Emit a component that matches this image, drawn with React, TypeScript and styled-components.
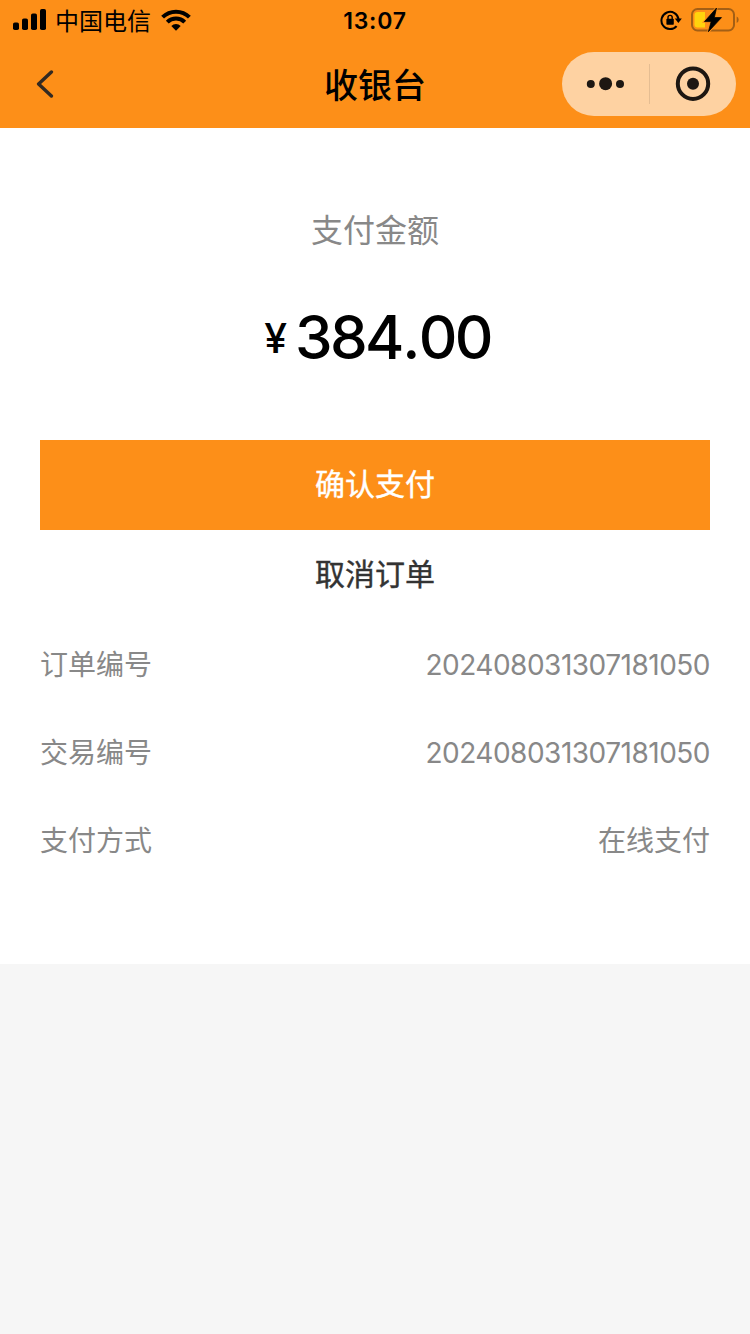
import React from 'react';
import styled, { createGlobalStyle } from 'styled-components';

const GlobalStyle = createGlobalStyle`
  * { box-sizing: border-box; }
  body {
    margin: 0;
    background: #f6f6f6;
    font-family: Inter, "Noto Sans CJK SC", sans-serif;
    color: #000;
  }
  svg { display: block; }
`;

const Page = styled.div`
  width: 750px;
  min-height: 1334px;
  background: #f6f6f6;
`;

const Header = styled.header`
  height: 128px;
  background: #fd8f18;
`;

const StatusBar = styled.div`
  height: 40px;
  padding: 0 11px 0 13px;
  display: grid;
  grid-template-columns: 1fr auto 1fr;
  align-items: center;
`;

const StatusGroup = styled.div<{ $end?: boolean }>`
  display: flex;
  align-items: center;
  justify-content: ${(p) => (p.$end ? 'flex-end' : 'flex-start')};
  gap: 9px;
`;

const Carrier = styled.span`
  font-size: 24px;
  line-height: 36px;
  padding-top: 3px;
  margin-right: 1px;
`;

const Clock = styled.span`
  font-size: 23px;
  font-weight: 600;
  line-height: 38px;
  padding-top: 2px;
  letter-spacing: 0.8px;
  margin-right: 2px;
`;

const NavBar = styled.nav`
  height: 88px;
  padding: 0 14px 0 36px;
  display: grid;
  grid-template-columns: 1fr auto 1fr;
  align-items: center;
`;

const BackButton = styled.button`
  border: 0;
  padding: 0;
  background: none;
  justify-self: start;
`;

const Title = styled.h1`
  margin: 0;
  padding: 3px 22px 0 0;
  font-size: 34px;
  font-weight: 500;
  line-height: 48px;
`;

const Capsule = styled.div`
  justify-self: end;
  width: 174px;
  height: 64px;
  border-radius: 32px;
  background: #fed2a2;
  display: flex;
  align-items: center;
`;

const CapsuleItem = styled.div`
  flex: 1;
  display: flex;
  justify-content: center;
`;

const CapsuleDivider = styled.div`
  width: 1px;
  height: 40px;
  background: #e5bd92;
`;

const Checkout = styled.main`
  height: 836px;
  padding: 80px 40px 0;
  background: #fff;
`;

const AmountLabel = styled.div`
  font-size: 32px;
  line-height: 46px;
  text-align: center;
  color: #888;
`;

const Amount = styled.div`
  height: 90px;
  margin-top: 38px;
  padding-left: 5px;
  display: flex;
  justify-content: center;
  align-items: center;
  line-height: 90px;
  font-weight: 500;
`;

const Currency = styled.span`
  font-size: 41px;
  font-weight: 450;
  padding-top: 2px;
  margin-right: 8px;
`;

const Value = styled.span`
  font-size: 60px;
  letter-spacing: -2.7px;
`;

const DecimalPoint = styled.span`
  margin: 0 1px 0 0.5px;
`;

const Action = styled.button<{ $primary?: boolean }>`
  display: block;
  width: 100%;
  height: 90px;
  padding: 0 0 7px;
  border: 0;
  font-family: inherit;
  font-size: 30px;
  font-weight: 400;
  -webkit-text-stroke: 0.4px currentColor;
  color: ${(p) => (p.$primary ? '#fff' : '#333')};
  background: ${(p) => (p.$primary ? '#fd8f18' : 'transparent')};
`;

const Actions = styled.div`
  margin-top: 58px;
`;

const Details = styled.dl`
  margin: 0;
`;

const DetailRow = styled.div`
  height: 88px;
  padding-top: 2px;
  display: flex;
  justify-content: space-between;
  align-items: center;
  font-size: 28px;
  line-height: 40px;
  color: #888;
`;

const Term = styled.dt``;

const Detail = styled.dd<{ $numeric?: boolean }>`
  margin: 0;
  letter-spacing: ${(p) => (p.$numeric ? '-0.5px' : 'normal')};
`;

const SignalIcon = () => (
  <svg width="33" height="22" viewBox="0 0 33 22">
    <rect x="0" y="13.5" width="6" height="7.5" rx="1.8" />
    <rect x="9" y="9.5" width="6" height="11.5" rx="1.8" />
    <rect x="18" y="4.5" width="6" height="16.5" rx="1.8" />
    <rect x="27" y="0" width="6" height="21" rx="1.8" />
  </svg>
);

const WifiIcon = () => (
  <svg width="30" height="22" viewBox="0 0 30 22">
    <g fill="none" stroke="#000" strokeWidth="4">
      <path d="M1.6 8.2a19 19 0 0 1 26.8 0" />
      <path d="M6.3 13.1a12.3 12.3 0 0 1 17.4 0" />
    </g>
    <path d="M15 21.7l-4.7-4.8a6.8 6.8 0 0 1 9.4 0z" />
  </svg>
);

const RotationLockIcon = () => (
  <svg width="22" height="22" viewBox="0 0.5 22 22">
    <path d="M16.6 17.6A8.6 8.6 0 1 1 18.6 11" fill="none" stroke="#000" strokeWidth="2" />
    <path d="M14.8 10h7l-3.4 4.4z" />
    <rect x="6.4" y="10.3" width="7.4" height="5.9" rx="0.8" />
    <path d="M8 10.7V9a2.1 2.1 0 0 1 4.2 0v1.7" fill="none" stroke="#000" strokeWidth="1.4" />
  </svg>
);

const BatteryIcon = () => (
  <svg width="48" height="24" viewBox="0 0 48 24">
    <rect x="1" y="1" width="42" height="21.5" rx="5.5" fill="none" stroke="#a35f15" strokeWidth="2" />
    <path d="M45.7 8.5v6.4q2-1 2-3.2t-2-3.2z" fill="#a35f15" />
    <path d="M6.5 4H14v15.5H6.5Q3.5 19.5 3.5 16.5V7Q3.5 4 6.5 4z" fill="#ffd30d" />
    <path
      d="M25.5 0L13.5 13.6h6.7L17.4 23.7 30.5 9.6h-7.2z"
      fill="none"
      stroke="#fd8f18"
      strokeWidth="2.4"
    />
    <path
      d="M25.5 0L13.5 13.6h6.7L17.4 23.7 30.5 9.6h-7.2z"
      stroke="#000"
      strokeWidth="0.8"
      strokeLinejoin="round"
    />
  </svg>
);

const BackIcon = () => (
  <svg width="18" height="28" viewBox="0 0 18 28" fill="none" stroke="#332a22" strokeWidth="3.4">
    <path d="M15.4 2L2.6 14l12.8 12" strokeLinecap="round" strokeLinejoin="round" />
  </svg>
);

const MoreIcon = () => (
  <svg width="38" height="14" viewBox="0 0 38 14" fill="#1d1712">
    <circle cx="4.8" cy="7" r="4" />
    <circle cx="19.6" cy="6.7" r="6.5" />
    <circle cx="34" cy="7" r="4" />
  </svg>
);

const TargetIcon = () => (
  <svg width="36" height="36" viewBox="0 0 36 36">
    <circle cx="18" cy="17.7" r="15.2" fill="none" stroke="#1d1712" strokeWidth="4" />
    <circle cx="18" cy="17.7" r="6" fill="#1d1712" />
  </svg>
);

const details = [
  { label: '订单编号', value: '202408031307181050', numeric: true },
  { label: '交易编号', value: '202408031307181050', numeric: true },
  { label: '支付方式', value: '在线支付', numeric: false },
];

export default function App() {
  return (
    <Page>
      <GlobalStyle />
      <Header>
        <StatusBar>
          <StatusGroup>
            <SignalIcon />
            <Carrier>中国电信</Carrier>
            <WifiIcon />
          </StatusGroup>
          <Clock>13:07</Clock>
          <StatusGroup $end>
            <RotationLockIcon />
            <BatteryIcon />
          </StatusGroup>
        </StatusBar>
        <NavBar>
          <BackButton aria-label="返回">
            <BackIcon />
          </BackButton>
          <Title>收银台</Title>
          <Capsule>
            <CapsuleItem>
              <MoreIcon />
            </CapsuleItem>
            <CapsuleDivider />
            <CapsuleItem>
              <TargetIcon />
            </CapsuleItem>
          </Capsule>
        </NavBar>
      </Header>
      <Checkout>
        <AmountLabel>支付金额</AmountLabel>
        <Amount>
          <Currency>¥</Currency>
          <Value>
            384<DecimalPoint>.</DecimalPoint>00
          </Value>
        </Amount>
        <Actions>
          <Action $primary>确认支付</Action>
          <Action>取消订单</Action>
        </Actions>
        <Details>
          {details.map((item) => (
            <DetailRow key={item.label}>
              <Term>{item.label}</Term>
              <Detail $numeric={item.numeric}>{item.value}</Detail>
            </DetailRow>
          ))}
        </Details>
      </Checkout>
    </Page>
  );
}
